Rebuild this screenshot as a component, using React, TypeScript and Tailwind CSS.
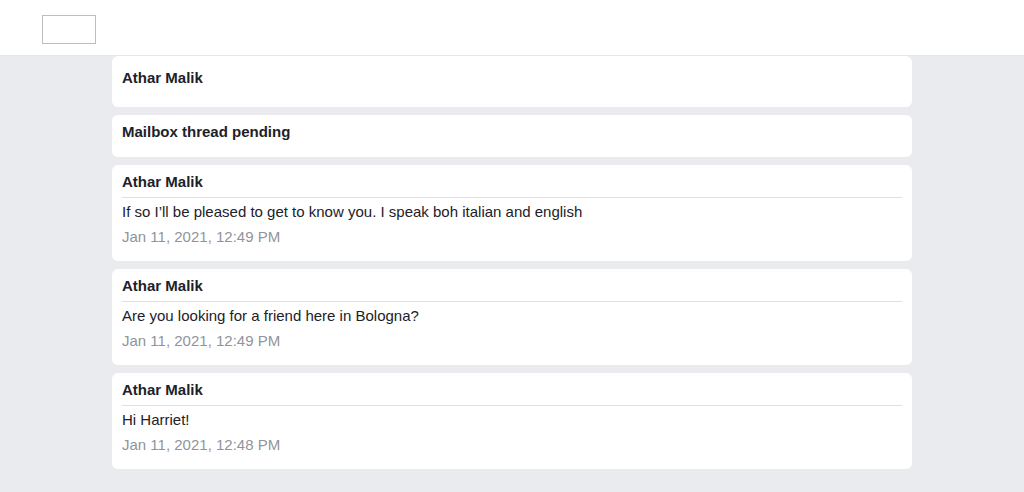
import React from 'react';

interface Message {
    id: number;
    author: string;
    body: string;
    sentAt: string;
}

const messages: Message[] = [
    { id: 3, author: 'Athar Malik', body: 'If so I\u2019ll be pleased to get to know you. I speak boh italian and english', sentAt: 'Jan 11, 2021, 12:49 PM' },
    { id: 2, author: 'Athar Malik', body: 'Are you looking for a friend here in Bologna?', sentAt: 'Jan 11, 2021, 12:49 PM' },
    { id: 1, author: 'Athar Malik', body: 'Hi Harriet!', sentAt: 'Jan 11, 2021, 12:48 PM' },
];

const MessageCard: React.FC<{ message: Message }> = ({ message }) => (
    <div className="bg-white rounded-md px-[10px] pt-[9px] pb-[13px]">
        <h3 className="text-[15px] leading-[16px] font-bold text-[#1d2129] pb-[7px] border-b border-[#dddfe2]">{message.author}</h3>
        <p className="text-[15px] leading-[22px] text-[#1d2129] mt-[3px]">{message.body}</p>
        <p className="text-[15px] leading-[22px] text-[#90949c] mt-[3px]">{message.sentAt}</p>
    </div>
);

const App: React.FC = () => {
    return (
        <div className="min-h-[492px] bg-[#e9ebee] font-['Liberation_Sans',Arial,sans-serif]">
            <header className="h-[56px] bg-white border-b border-[#e5e6e9] pl-[42px] pt-[15px]">
                <div className="w-[54px] h-[29px] border border-[#bdbdbd] bg-white" />
            </header>

            <main className="w-[800px] ml-[112px] flex flex-col gap-[8px] pb-[20px]">
                <div className="bg-white rounded-md px-[10px] pt-[14px] h-[51px]">
                    <h2 className="text-[15px] leading-[16px] font-bold text-[#1d2129]">Athar Malik</h2>
                </div>
                <div className="bg-white rounded-md px-[10px] pt-[9px] h-[42px]">
                    <h2 className="text-[15px] leading-[16px] font-bold text-[#1d2129]">Mailbox thread pending</h2>
                </div>
                {messages.map(m => (
                    <MessageCard key={m.id} message={m} />
                ))}
            </main>
        </div>
    );
};

export default App;
